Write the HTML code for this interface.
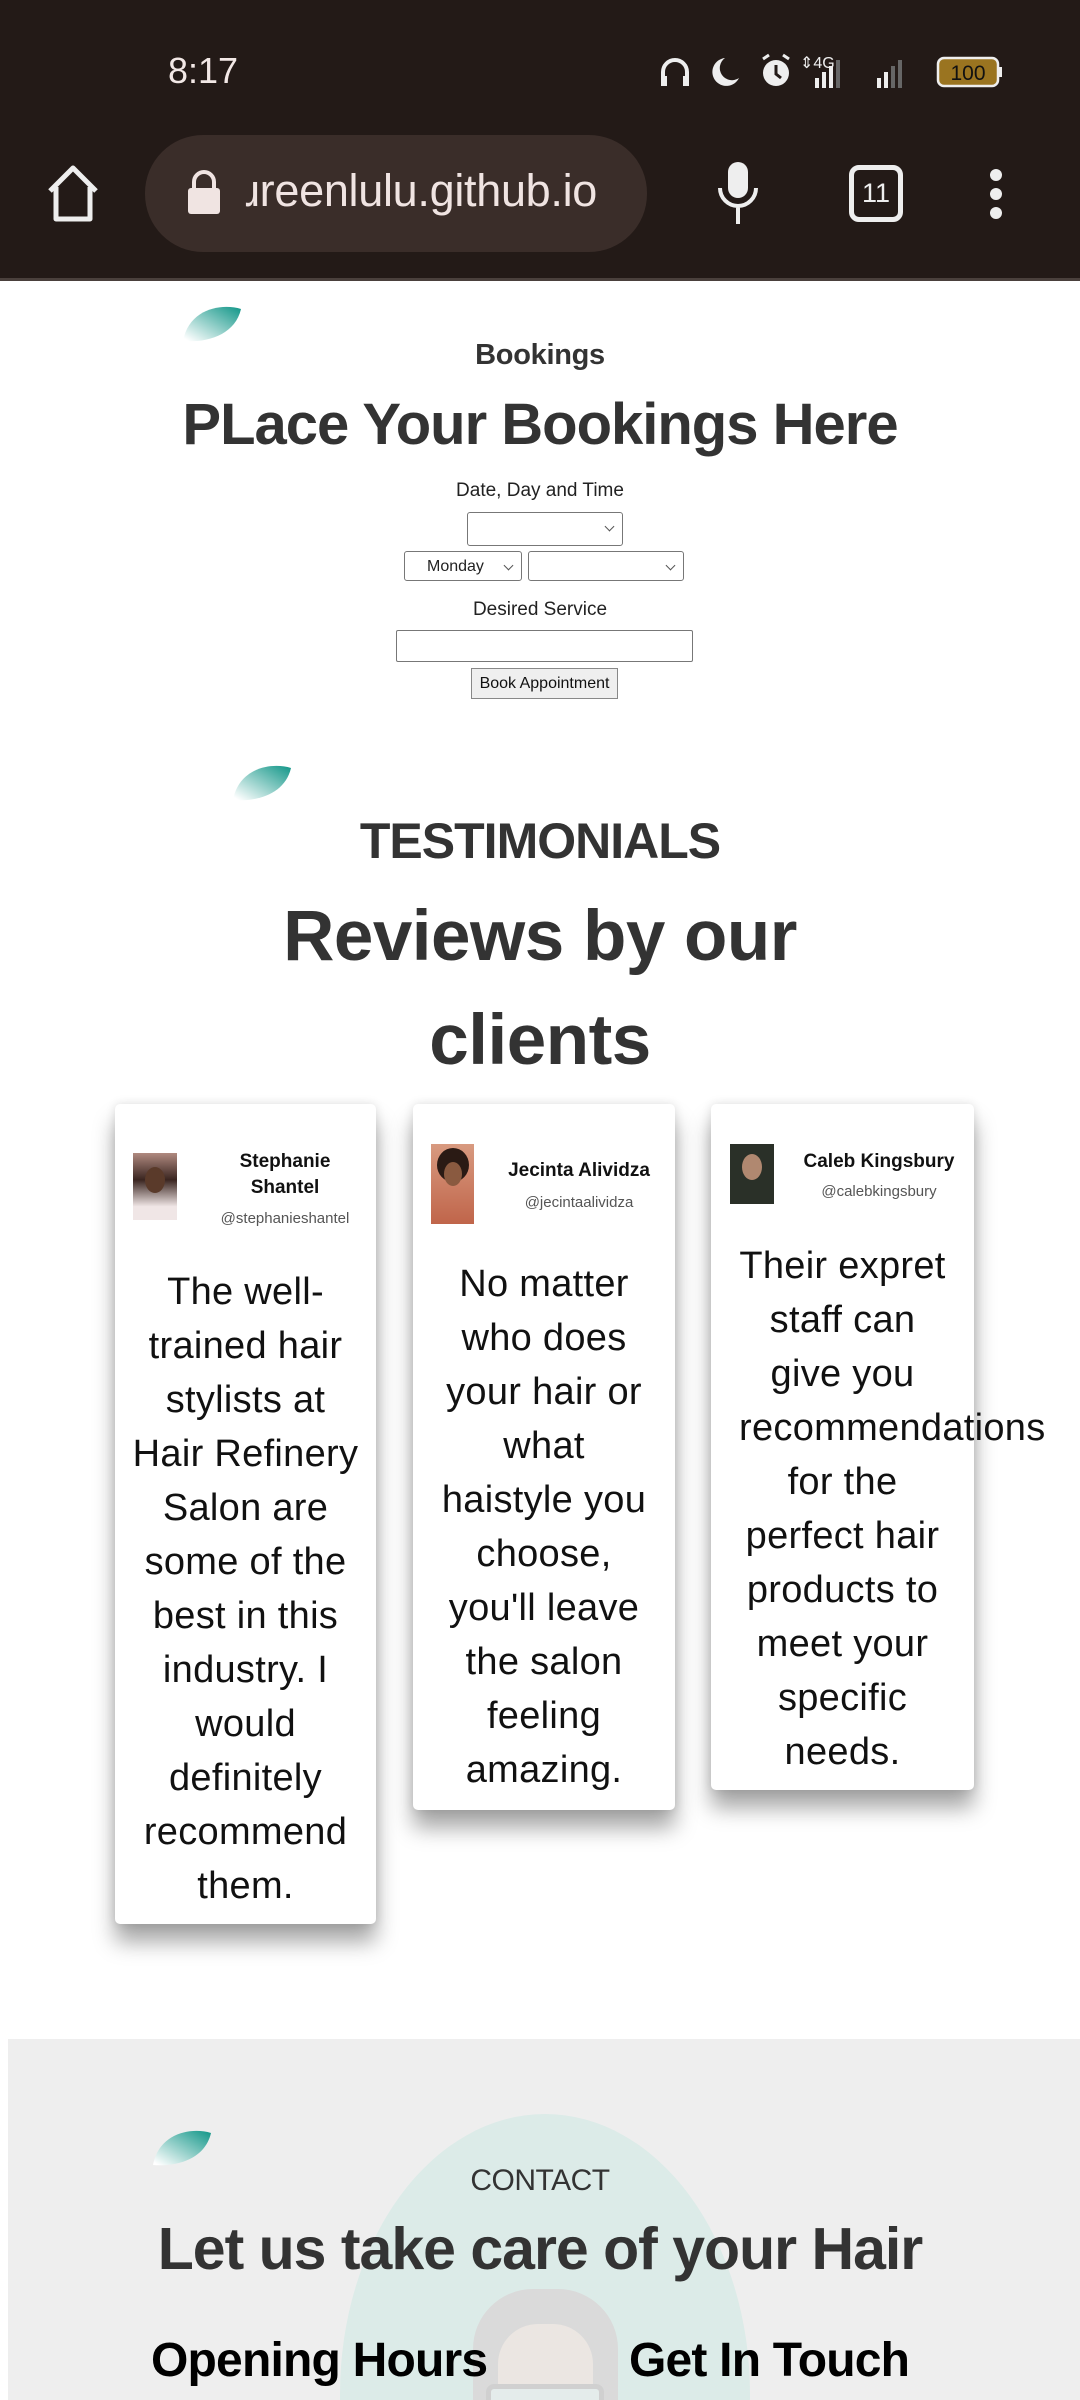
<!DOCTYPE html>
<html><head><meta charset="utf-8">
<style>
*{margin:0;padding:0;box-sizing:border-box}
html,body{width:1080px;height:2400px;overflow:hidden}
body{background:#fff;position:relative;font-family:"Liberation Sans",sans-serif;color:#333}
.a{position:absolute}
.c{position:absolute;left:0;width:1080px;text-align:center;white-space:nowrap}
.sel{position:absolute;border:1.5px solid #777;border-radius:3px;background:#fff;font-size:16px;color:#222}
.sel:after{content:"";position:absolute;right:9px;top:10px;width:6px;height:6px;border-right:1.5px solid #555;border-bottom:1.5px solid #555;transform:rotate(45deg)}
.card{position:absolute;top:1104px;background:#fff;border-radius:5px;box-shadow:0 18px 22px rgba(0,0,0,.35),0 0 10px rgba(0,0,0,.12)}
.body{position:absolute;left:0;width:100%;text-align:center;font-size:38px;line-height:54px;color:#111;white-space:nowrap;letter-spacing:.3px}
.nm{position:absolute;text-align:center;font-weight:bold;font-size:19px;color:#111;line-height:26px}
.hd{position:absolute;text-align:center;font-size:15px;color:#555}
.leaf{position:absolute}
</style></head><body>
<div class="a" style="left:0;top:0;width:1080px;height:279px;background:#231a17"></div>
<div class="a" style="left:0;top:278px;width:1080px;height:3px;background:#4a403c"></div>
<div class="a" style="left:168px;top:50px;font-size:36px;color:#f2e8e6">8:17</div>
<svg class="a" style="left:655px;top:50px" width="350" height="44" viewBox="0 0 350 44">
<path d="M8 34V22a12 12 0 0 1 24 0v12" fill="none" stroke="#eee" stroke-width="4"/><rect x="6" y="26" width="6" height="10" fill="#eee"/><rect x="28" y="26" width="6" height="10" fill="#eee"/>
<path d="M70 8a14 14 0 1 0 14 20a12 12 0 0 1 -14 -20z" fill="#eee"/>
<circle cx="121" cy="23" r="13" fill="#eee"/><path d="M121 15v9l5 4" stroke="#231a17" stroke-width="3" fill="none"/><path d="M108 9l6-4M134 9l-6-4" stroke="#eee" stroke-width="3"/>
<text x="145" y="18" font-size="16" fill="#eee" font-family="Liberation Sans">⇕4G</text>
<rect x="160" y="28" width="4" height="10" fill="#eee"/><rect x="167" y="22" width="4" height="16" fill="#eee"/><rect x="174" y="16" width="4" height="22" fill="#eee"/><rect x="181" y="10" width="4" height="28" fill="#666"/>
<rect x="222" y="28" width="4" height="10" fill="#eee"/><rect x="229" y="22" width="4" height="16" fill="#eee"/><rect x="236" y="16" width="4" height="22" fill="#666"/><rect x="243" y="10" width="4" height="28" fill="#666"/>
<rect x="283" y="8" width="60" height="28" rx="6" fill="#9a7420" stroke="#eee" stroke-width="2.5"/><rect x="344" y="17" width="3" height="10" fill="#eee"/>
<text x="313" y="30" font-size="21" fill="#111" text-anchor="middle" font-family="Liberation Sans">100</text>
</svg>
<svg class="a" style="left:44px;top:163px" width="58" height="60" viewBox="0 0 58 60"><path d="M6 28L29 5l23 23M12 24v32h34V24" fill="none" stroke="#eee" stroke-width="5" stroke-linejoin="round"/></svg>
<div class="a" style="left:145px;top:135px;width:502px;height:117px;border-radius:58px;background:#3a2d29;overflow:hidden">
<svg class="a" style="left:40px;top:34px" width="38" height="46" viewBox="0 0 38 46"><path d="M9 20v-7a10 10 0 0 1 20 0v7" fill="none" stroke="#f0e4e2" stroke-width="4"/><rect x="3" y="19" width="32" height="26" rx="3" fill="#f0e4e2"/></svg>
<div class="a" style="left:100px;top:30px;font-size:45px;color:#f0e4e2;white-space:nowrap;letter-spacing:-.3px">ɹreenlulu.github.io</div>
</div>
<svg class="a" style="left:714px;top:160px" width="48" height="66" viewBox="0 0 48 66"><rect x="14" y="2" width="20" height="36" rx="10" fill="#eee"/><path d="M6 28a18 18 0 0 0 36 0M24 46v18" fill="none" stroke="#eee" stroke-width="4"/></svg>
<div class="a" style="left:849px;top:165px;width:54px;height:57px;border:5px solid #eee;border-radius:10px;color:#eee;font-size:27px;text-align:center;line-height:47px">11</div>
<svg class="a" style="left:986px;top:168px" width="20" height="52"><circle cx="10" cy="7" r="6" fill="#eee"/><circle cx="10" cy="26" r="6" fill="#eee"/><circle cx="10" cy="45" r="6" fill="#eee"/></svg>

<svg width="0" height="0" style="position:absolute"><defs><linearGradient id="lg" x1="1" y1="0" x2="0" y2="1"><stop offset="0" stop-color="#119688"/><stop offset=".95" stop-color="#fff"/></linearGradient></defs></svg>
<svg class="leaf" style="left:181px;top:305px" width="64" height="38" viewBox="0 0 64 38"><path d="M60 4C40-2 8 4 2 36C26 38 54 30 60 4z" fill="url(#lg)"/></svg>
<div class="c" style="top:339px;font-size:29px;font-weight:bold;color:#333;letter-spacing:-.3px">Bookings</div>
<div class="c" style="top:391px;font-size:58px;font-weight:bold;color:#333;letter-spacing:-1px">PLace Your Bookings Here</div>
<div class="c" style="top:480px;font-size:19px;color:#222">Date, Day and Time</div>
<div class="sel" style="left:467px;top:512px;width:156px;height:34px"></div>
<div class="sel" style="left:404px;top:551px;width:118px;height:30px;padding:6px 0 0 22px">Monday</div>
<div class="sel" style="left:528px;top:551px;width:156px;height:30px"></div>
<div class="c" style="top:599px;font-size:19px;color:#222">Desired Service</div>
<div class="a" style="left:396px;top:630px;width:297px;height:32px;border:1.5px solid #777;border-radius:2px"></div>
<div class="a" style="left:471px;top:668px;width:147px;height:31px;border:1.5px solid #888;background:#efefef;font-size:16px;text-align:center;line-height:30px;color:#111">Book Appointment</div>

<svg class="leaf" style="left:231px;top:764px" width="64" height="38" viewBox="0 0 64 38"><path d="M60 4C40-2 8 4 2 36C26 38 54 30 60 4z" fill="url(#lg)"/></svg>
<div class="c" style="top:812px;font-size:50px;font-weight:bold;color:#333;letter-spacing:-1px">TESTIMONIALS</div>
<div class="c" style="top:896px;font-size:71px;font-weight:bold;color:#333;letter-spacing:-.5px">Reviews by our</div>
<div class="c" style="top:1000px;font-size:71px;font-weight:bold;color:#333;letter-spacing:-.5px">clients</div>

<div class="card" style="left:115px;width:261px;height:820px">
 <div class="a" style="left:18px;top:49px;width:44px;height:67px;background:linear-gradient(#b08a80,#3a2520 40%,#f0e6e6 80%)"><div class="a" style="left:12px;top:14px;width:20px;height:26px;border-radius:50%;background:#5a3a2a"></div></div>
 <div class="nm" style="left:70px;width:200px;top:45px">Stephanie<br>Shantel</div>
 <div class="hd" style="left:70px;width:200px;top:106px">@stephanieshantel</div>
 <div class="body" style="top:161px">The well-<br>trained hair<br>stylists at<br>Hair Refinery<br>Salon are<br>some of the<br>best in this<br>industry. I<br>would<br>definitely<br>recommend<br>them.</div>
</div>
<div class="card" style="left:413px;width:262px;height:706px">
 <div class="a" style="left:18px;top:40px;width:43px;height:80px;background:linear-gradient(#d89a80,#c0654a)"><div class="a" style="left:6px;top:4px;width:32px;height:34px;border-radius:50%;background:#2a1a14"></div><div class="a" style="left:13px;top:18px;width:18px;height:24px;border-radius:50%;background:#8a5a40"></div></div>
 <div class="nm" style="left:66px;width:200px;top:54px">Jecinta Alividza</div>
 <div class="hd" style="left:66px;width:200px;top:90px">@jecintaalividza</div>
 <div class="body" style="top:153px">No matter<br>who does<br>your hair or<br>what<br>haistyle you<br>choose,<br>you'll leave<br>the salon<br>feeling<br>amazing.</div>
</div>
<div class="card" style="left:711px;width:263px;height:686px">
 <div class="a" style="left:19px;top:40px;width:44px;height:60px;background:#2a3028"><div class="a" style="left:12px;top:10px;width:20px;height:26px;border-radius:50%;background:#b08870"></div></div>
 <div class="nm" style="left:68px;width:200px;top:45px">Caleb Kingsbury</div>
 <div class="hd" style="left:68px;width:200px;top:79px">@calebkingsbury</div>
 <div class="body" style="top:135px;left:0;width:263px;overflow:visible">Their expret<br>staff can<br>give you<br><span style="position:relative;left:28px">recommendations</span><br>for the<br>perfect hair<br>products to<br>meet your<br>specific<br>needs.</div>
</div>

<div class="a" style="left:8px;top:2039px;width:1072px;height:361px;background:#eeeeee;overflow:hidden">
 <div class="a" style="left:332px;top:75px;width:410px;height:560px;border-radius:50%;background:#dcebe8"></div>
 <div class="a" style="left:465px;top:250px;width:145px;height:300px;border-radius:60px 60px 0 0;background:#dadada"></div>
 <div class="a" style="left:490px;top:285px;width:95px;height:240px;border-radius:40px;background:#ebe6e2"></div>
 <div class="a" style="left:478px;top:345px;width:118px;height:62px;border:5px solid #d0d0d0;border-radius:8px;background:#e4eceb"></div>
</div>
<svg class="leaf" style="left:151px;top:2129px" width="64" height="38" viewBox="0 0 64 38"><path d="M60 4C40-2 8 4 2 36C26 38 54 30 60 4z" fill="url(#lg)"/></svg>
<div class="c" style="top:2164px;font-size:30px;color:#333;letter-spacing:-.5px">CONTACT</div>
<div class="c" style="top:2215px;font-size:59px;font-weight:bold;color:#333;letter-spacing:-1px">Let us take care of your Hair</div>
<div class="a" style="left:151px;top:2333px;font-size:48px;font-weight:bold;color:#000;letter-spacing:-.8px;white-space:nowrap">Opening Hours</div>
<div class="a" style="left:629px;top:2333px;font-size:48px;font-weight:bold;color:#000;letter-spacing:-.8px;white-space:nowrap">Get In Touch</div>
</body></html>
